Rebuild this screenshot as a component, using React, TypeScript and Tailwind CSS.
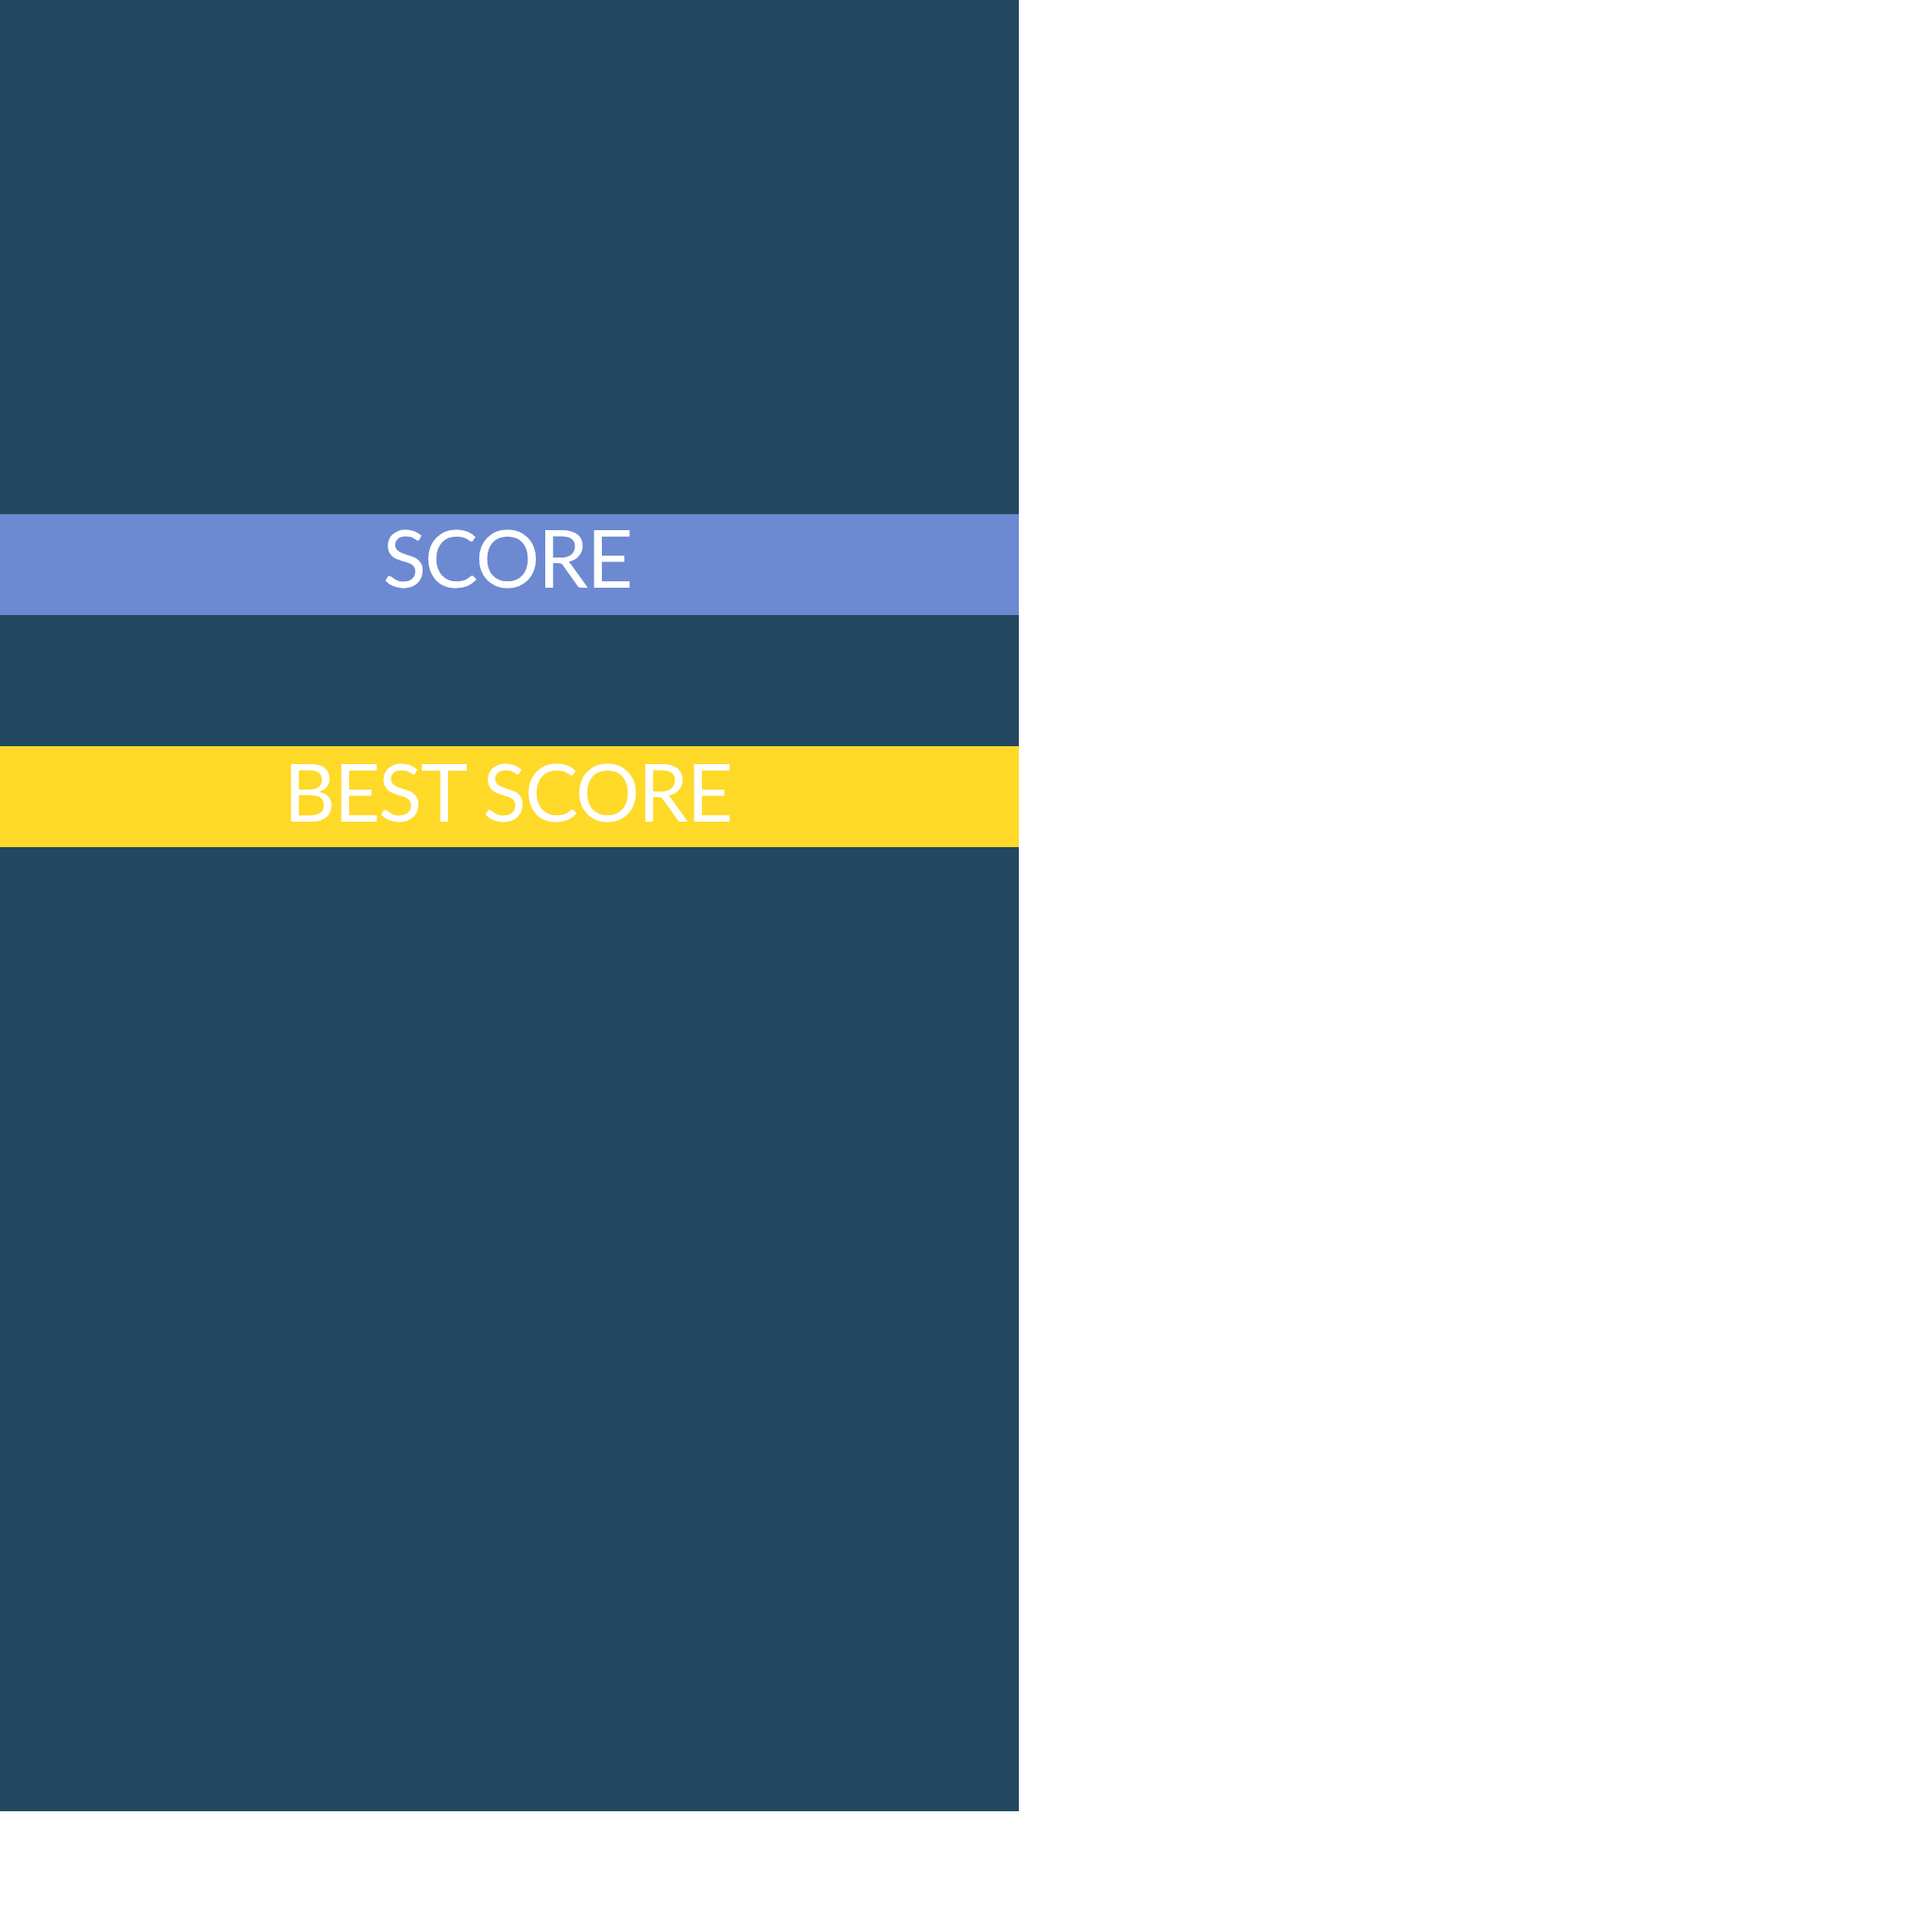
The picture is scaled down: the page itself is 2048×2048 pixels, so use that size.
import React from 'react';

const App: React.FC = () => {
  return (
    <div className="w-[1080px] h-[1920px] bg-[#23485f] flex flex-col">
      {/* Score bar */}
      <div className="mt-[545px] h-[107px] bg-[#6c89d2] flex items-center justify-center pb-[16px]">
        <span className="text-white text-[85px] leading-none font-['Lato',sans-serif] font-normal tracking-[-0.02em] mr-[5px]">SCORE</span>
      </div>

      {/* Best score bar */}
      <div className="mt-[139px] h-[107px] bg-[#fed928] flex items-center justify-center pb-[12px]">
        <span className="text-white text-[85px] leading-none font-['Lato',sans-serif] font-normal tracking-[-0.02em] mr-[4px]">BEST SCORE</span>
      </div>
    </div>
  );
};

export default App;
